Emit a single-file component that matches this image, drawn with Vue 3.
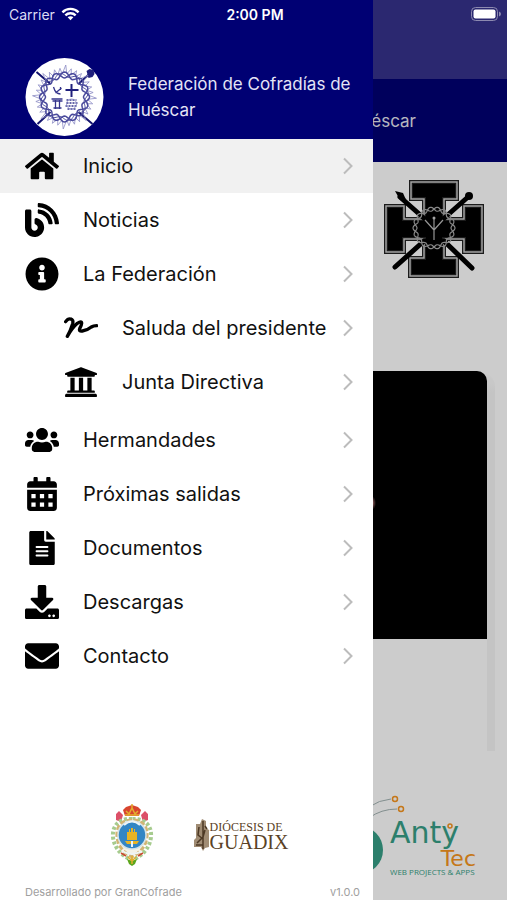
<template>
  <div class="app">
    <header class="status-bar">
      <div class="carrier">
        <span>Carrier</span>
        <svg class="wifi" viewBox="0 0 20 14" aria-hidden="true">
          <path d="M1.5 5.2a12 12 0 0 1 17 0" />
          <path d="M4.6 8.4a7.6 7.6 0 0 1 10.8 0" />
          <path class="wifi-dot" d="M10 13.6 7 10.5a4.2 4.2 0 0 1 6 0z" />
        </svg>
      </div>
      <time class="clock">2:00 PM</time>
      <svg class="battery" viewBox="0 0 30 14" aria-hidden="true">
        <rect class="battery-case" x="0.5" y="0.5" width="26" height="13" rx="4" />
        <rect x="2.5" y="2.5" width="22" height="9" rx="2" />
        <path class="battery-cap" d="M28 4.500q2 .8 2 2.500t-2 2.500z" />
      </svg>
    </header>

    <!-- Home page -->
    <main class="page">
      <div class="page-toolbar"></div>
      <div class="page-title">Huéscar</div>

      <div class="brotherhoods">
        <svg class="cross" viewBox="0 0 100 98" role="img" aria-label="Hermandad">
          <path
            class="cross-edge"
            d="M27 2h46v17H60v20h20V26h18v46H80V59H60v19h13v18H26V78h14V59H20v13H2V26h18v13h20V19H27z"
          />
          <path
            class="cross-line"
            d="M27 2h46v17H60v20h20V26h18v46H80V59H60v19h13v18H26V78h14V59H20v13H2V26h18v13h20V19H27z"
          />
          <path class="spear" d="M16 17 42 40M84 17 58 40M40 61 11 87M60 61 88 88" />
          <path d="M11 11l8 2 4 9-7-2z" />
          <circle cx="85" cy="16" r="4" />
          <path class="crown" :d="ring(50, 48, 19, 2, 9, 0)" />
          <path class="crown" :d="ring(50, 48, 19, 2, 9, Math.PI)" />
          <path class="scourge" d="M50 60V38M50 50 41 40M50 50l9-10" />
          <circle class="scourge-tip" cx="50" cy="38" r="1.500" />
        </svg>
      </div>

      <div class="carousel">
        <article class="card">
          <div class="card-photo"></div>
          <div class="card-body"></div>
        </article>
      </div>

      <footer class="page-footer">
        <svg class="antytec" viewBox="0 0 142 92" role="img" aria-label="Anty Tec">
          <circle class="teal" cx="24" cy="57" r="24" />
          <path class="wire" d="M34 14q10-7 22-8M34 25q12-9 28-9" />
          <circle class="node" cx="60" cy="6" r="2.500" />
          <circle class="node" cx="66" cy="16" r="2.500" />
          <text class="teal brand" x="55" y="50">Anty</text>
          <circle class="node" cx="115" cy="33" r="2" />
          <text class="orange brand small" x="141" y="73" text-anchor="end">Tec</text>
          <text class="teal tagline" x="55" y="82">WEB PROJECTS &amp; APPS</text>
        </svg>
      </footer>
    </main>

    <div class="backdrop"></div>

    <!-- Side menu -->
    <aside class="drawer">
      <div class="drawer-header">
        <svg class="emblem" viewBox="0 0 78 78" aria-hidden="true">
          <circle class="emblem-bg" cx="39" cy="39" r="39" />
          <path class="emblem-spear" d="M11 14 25 26M66 14 53 26M25 54 12 66M53 54l14 12" />
          <path d="M61 13l3-2 4 1 1 4-2 3-4 1z" />
          <path class="emblem-thorn" :d="thorns" />
          <path class="emblem-ring" :d="ring(39, 39, 22, 3, 8, 0)" />
          <path class="emblem-ring" :d="ring(39, 39, 22, 3, 8, Math.PI)" />
          <path class="emblem-ring thin" :d="ring(39, 39, 22, 2, 8, Math.PI / 2)" />
          <path class="emblem-cross" d="M46 26v13M40 32h13" />
          <path class="emblem-mark" d="M28 29q2 7 7 7M30 35l6-5M35 29v3" />
          <path class="emblem-mark" d="M26 41h11M27 43h10M30 42v9M34 42v9M28 50h8" />
          <path class="emblem-mark dotted" d="M41 42h10M41 45h11M40 48h12M42 51h8" />
          <circle class="emblem-thorn" cx="46" cy="46" r="5" />
        </svg>
        <h1 class="drawer-title">Federación de Cofradías de Huéscar</h1>
      </div>

      <nav class="menu">
        <a
          v-for="item in items"
          :key="item.label"
          href="#"
          class="menu-item"
          :class="{ active: item.label === current, sub: item.sub, last: item.last }"
          @click.prevent="current = item.label"
        >
          <svg
            class="menu-icon"
            :class="{ outline: item.stroke }"
            :viewBox="item.box"
            aria-hidden="true"
          >
            <path :d="item.icon" fill-rule="evenodd" />
          </svg>
          <span class="menu-label">{{ item.label }}</span>
          <svg class="chevron" viewBox="0 0 10 18" aria-hidden="true">
            <path d="M1 1.500 8.500 9 1 16.500" />
          </svg>
        </a>
      </nav>

      <div class="sponsors">
        <svg class="crest" viewBox="0 0 44 62" role="img" aria-label="Huéscar">
          <path class="red" d="M13 6l3-3 6-2 6 2 3 3-2 6H15z" />
          <path class="gold-line" d="M15 11h14M16 7l3 3 3-6 3 6 3-3M22 0v4" />
          <path class="pink" d="M9 7l4 4-2 7-5-2V10zM35 7l-4 4 2 7 5-2V10z" />
          <path class="leaf" d="M22 15C8 14 2 23 3 33s8 19 19 23c11-4 18-13 19-23S36 14 22 15z" />
          <path class="gold-wreath" d="M22 16C10 16 6 24 7 33s6 15 15 20c9-5 14-11 15-20s-3-17-15-17z" />
          <circle class="medal" cx="22" cy="31" r="14" />
          <path class="gold" d="M17 36v-8h2v-3h1v3h1v-4h2v4h1v-3h1v3h2v8z" />
          <path class="gold" d="M15 37h14l-2 3H17z" />
          <path class="white-line" d="M22 37v6M12 47q10 6 20 0M14 21q8-7 16 0" />
          <path class="green" d="M17 55l5 2 5-2-2 5-3 2-3-2z" />
          <path class="gold-line" d="M22 52v8M18 53l4 4 4-4" />
          <path class="red-line" d="M11 49l5 3M28 52l5-3" />
        </svg>

        <div class="diocese">
          <svg class="diocese-mark" viewBox="0 0 17 34" aria-hidden="true">
            <path class="stone" d="M3 6h4l2-5 4 2v7l3 2v17l-4 1-2 3-2-4H1V22l2-2z" />
            <path class="stone-line" d="M10 3v28M6 9l-1 8 5 4M12 12l-2 7-6 6M3 27h7M12 8l2 3" />
          </svg>
          <div class="diocese-text">
            <span class="diocese-top">DIÓCESIS DE</span>
            <span class="diocese-name">GUADIX</span>
          </div>
        </div>
      </div>

      <footer class="drawer-footer">
        <span>Desarrollado por GranCofrade</span>
        <span>v1.0.0</span>
      </footer>
    </aside>
  </div>
</template>

<script setup>
import { ref } from "vue";

const current = ref("Inicio");

const items = [
  {
    label: "Inicio",
    box: "0 0 576 512",
    icon: "M280.37 148.26L96 300.11V464a16 16 0 0 0 16 16l112.06-.29a16 16 0 0 0 15.92-16V368a16 16 0 0 1 16-16h64a16 16 0 0 1 16 16v95.64a16 16 0 0 0 16 16.05L464 480a16 16 0 0 0 16-16V300L295.67 148.26a12.19 12.19 0 0 0-15.3 0zM571.6 251.47L488 182.56V44.05a12 12 0 0 0-12-12h-56a12 12 0 0 0-12 12v72.61L318.47 43a48 48 0 0 0-61 0L4.34 251.47a12 12 0 0 0-1.6 16.9l25.5 31A12 12 0 0 0 45.15 301l235.22-193.74a12.19 12.19 0 0 1 15.3 0L530.9 301a12 12 0 0 0 16.9-1.6l25.5-31a12 12 0 0 0-1.7-16.93z",
  },
  {
    label: "Noticias",
    box: "0 0 512 512",
    icon: "M172.2 226.8c-14.6-2.9-28.2 8.9-28.2 23.8V301c0 10.2 7.1 18.4 16.7 22 18.2 6.8 31.3 24.4 31.3 45 0 26.5-21.5 48-48 48s-48-21.5-48-48V120c0-13.3-10.7-24-24-24H24c-13.3 0-24 10.7-24 24v248c0 89.5 82.1 160.2 175 140.7 54.4-11.4 98.3-55.4 109.7-109.7 17.4-82.9-37-157.2-112.5-172.2zM209 0c-9.2-.5-17 6.8-17 16v31.6c0 8.5 6.6 15.5 15 15.9 129.4 7 233.4 112 240.9 241.5.5 8.4 7.5 15 15.9 15h32.1c9.2 0 16.5-7.8 16-17C503.4 139.8 372.2 8.6 209 0zm.3 96c-9.3-.7-17.3 6.7-17.3 16.1v32.1c0 8.4 6.5 15.3 14.8 15.9 76.8 6.3 138 68.2 144.9 145.2.8 8.3 7.6 14.7 15.9 14.7h32.2c9.3 0 16.8-8 16.1-17.3-8.4-110.1-96.5-198.2-206.6-206.7z",
  },
  {
    label: "La Federación",
    box: "0 0 512 512",
    icon: "M256 8C119.043 8 8 119.083 8 256c0 136.997 111.043 248 248 248s248-111.003 248-248C504 119.083 392.957 8 256 8zm0 110c23.196 0 42 18.804 42 42s-18.804 42-42 42-42-18.804-42-42 18.804-42 42-42zm56 254c0 6.627-5.373 12-12 12h-88c-6.627 0-12-5.373-12-12v-24c0-6.627 5.373-12 12-12h12v-64h-12c-6.627 0-12-5.373-12-12v-24c0-6.627 5.373-12 12-12h64c6.627 0 12 5.373 12 12v100h12c6.627 0 12 5.373 12 12v24z",
  },
  {
    label: "Saluda del presidente",
    sub: true,
    stroke: true,
    box: "0 0 102 102",
    icon: "M5 32Q12 22 20 24Q29 26 26 38Q20 58 10 76Q25 50 40 37Q53 28 53 37Q53 42 47 53Q44 62 55 60Q70 58 82 48Q88 44 98 44",
  },
  {
    label: "Junta Directiva",
    sub: true,
    last: true,
    box: "0 0 512 512",
    icon: "M496 128v16a8 8 0 0 1-8 8h-24v12c0 6.627-5.373 12-12 12H60c-6.627 0-12-5.373-12-12v-12H24a8 8 0 0 1-8-8v-16a8 8 0 0 1 4.941-7.392l232-88a7.996 7.996 0 0 1 6.118 0l232 88A8 8 0 0 1 496 128zm-24 304H40c-13.255 0-24 10.745-24 24v16a8 8 0 0 0 8 8h464a8 8 0 0 0 8-8v-16c0-13.255-10.745-24-24-24zM96 192v192H60c-6.627 0-12 5.373-12 12v20h416v-20c0-6.627-5.373-12-12-12h-36V192h-64v192h-64V192h-64v192h-64V192H96z",
  },
  {
    label: "Hermandades",
    box: "0 0 640 512",
    icon: "M96 224c35.3 0 64-28.7 64-64s-28.7-64-64-64-64 28.7-64 64 28.7 64 64 64zm448 0c35.3 0 64-28.7 64-64s-28.7-64-64-64-64 28.7-64 64 28.7 64 64 64zm32 32h-64c-17.6 0-33.5 7.1-45.1 18.6 40.3 22.1 68.9 62 75.1 109.4h66c17.7 0 32-14.3 32-32v-32c0-35.3-28.7-64-64-64zm-256 0c61.9 0 112-50.1 112-112S381.9 32 320 32 208 82.1 208 144s50.1 112 112 112zm76.8 32h-8.3c-20.8 10-43.9 16-68.5 16s-47.6-6-68.5-16h-8.3C179.6 288 128 339.6 128 403.2V432c0 26.5 21.5 48 48 48h288c26.5 0 48-21.5 48-48v-28.8c0-63.6-51.6-115.2-115.2-115.2zm-223.7-13.4C161.5 263.1 145.6 256 128 256H64c-35.3 0-64 28.7-64 64v32c0 17.7 14.3 32 32 32h65.9c6.3-47.4 34.9-87.3 75.2-109.4z",
  },
  {
    label: "Próximas salidas",
    box: "-32 0 512 512",
    icon: "M0 464c0 26.5 21.5 48 48 48h352c26.5 0 48-21.5 48-48V192H0zM64 256h64v64H64zM192 256h64v64h-64zM320 256h64v64h-64zM64 384h64v64H64zM192 384h64v64h-64zM320 384h64v64h-64zM400 64h-48V16c0-8.8-7.2-16-16-16h-32c-8.8 0-16 7.2-16 16v48H160V16c0-8.8-7.2-16-16-16h-32c-8.8 0-16 7.2-16 16v48H48C21.5 64 0 85.5 0 112v48h448v-48c0-26.5-21.5-48-48-48z",
  },
  {
    label: "Documentos",
    box: "-64 0 512 512",
    icon: "M224 136V0H24C10.7 0 0 10.7 0 24v464c0 13.3 10.7 24 24 24h336c13.3 0 24-10.7 24-24V160H248c-13.2 0-24-10.8-24-24zm64 236c0 6.6-5.4 12-12 12H108c-6.6 0-12-5.4-12-12v-8c0-6.6 5.4-12 12-12h168c6.6 0 12 5.4 12 12v8zm0-64c0 6.6-5.4 12-12 12H108c-6.6 0-12-5.4-12-12v-8c0-6.6 5.4-12 12-12h168c6.6 0 12 5.4 12 12v8zm0-72v8c0 6.6-5.4 12-12 12H108c-6.6 0-12-5.4-12-12v-8c0-6.6 5.4-12 12-12h168c6.6 0 12 5.4 12 12zm96-114.1v6.1H256V0h6.1c6.4 0 12.5 2.5 17 7l97.9 98c4.5 4.5 7 10.6 7 16.9z",
  },
  {
    label: "Descargas",
    box: "0 0 512 512",
    icon: "M216 0h80c13.3 0 24 10.7 24 24v168h87.7c17.8 0 26.7 21.5 14.1 34.1L269.7 378.3c-7.5 7.5-19.8 7.5-27.3 0L90.1 226.1c-12.6-12.6-3.7-34.1 14.1-34.1H192V24c0-13.3 10.7-24 24-24zm296 376v112c0 13.3-10.7 24-24 24H24c-13.3 0-24-10.7-24-24V376c0-13.3 10.7-24 24-24h146.7l49 49c20.1 20.1 52.5 20.1 72.6 0l49-49H488c13.3 0 24 10.7 24 24zm-124 88c0-11-9-20-20-20s-20 9-20 20 9 20 20 20 20-9 20-20zm64 0c0-11-9-20-20-20s-20 9-20 20 9 20 20 20 20-9 20-20z",
  },
  {
    label: "Contacto",
    box: "0 0 512 512",
    icon: "M502.3 190.8c3.9-3.1 9.7-.2 9.7 4.7V400c0 26.5-21.5 48-48 48H48c-26.5 0-48-21.5-48-48V195.6c0-5 5.7-7.8 9.7-4.7 22.4 17.4 52.1 39.5 154.1 113.6 21.1 15.4 56.7 47.8 92.2 47.6 35.7.3 72-32.8 92.3-47.6 102-74.1 131.6-96.3 154-113.7zM256 320c23.2.4 56.6-29.2 73.4-41.4 132.7-96.3 142.8-104.7 173.4-128.7 5.8-4.5 9.2-11.5 9.2-18.9v-19c0-26.5-21.5-48-48-48H48c-26.5 0-48 21.5-48 48v19c0 7.4 3.4 14.3 9.2 18.9 30.6 23.9 40.7 32.4 173.4 128.7 16.8 12.2 50.2 41.8 73.4 41.4z",
  },
];

// wavy closed ring, two of them out of phase make a braided crown
const ring = (cx, cy, radius, wave, count, phase) => {
  const points = [];
  for (let i = 0; i < 144; i++) {
    const angle = (i / 144) * Math.PI * 2;
    const r = radius + wave * Math.cos(count * angle + phase);
    points.push(`${(cx + r * Math.cos(angle)).toFixed(2)} ${(cy + r * Math.sin(angle)).toFixed(2)}`);
  }
  return `M${points.join("L")}Z`;
};

const thorns = Array.from({ length: 32 }, (_, i) => {
  const angle = (i / 32) * Math.PI * 2;
  const outer = i % 4 === 0 ? 32 : 29;
  const at = (r, a) => `${(39 + r * Math.cos(a)).toFixed(2)} ${(39 + r * Math.sin(a)).toFixed(2)}`;
  return `M${at(23, angle - 0.1)}L${at(outer, angle + 0.04)}L${at(23, angle + 0.1)}`;
}).join("");
</script>

<style>
body {
  margin: 0;
}
</style>

<style scoped>
.app {
  position: relative;
  min-height: 100vh;
  overflow: hidden;
  background: #fff;
  font-family: Inter, "Liberation Sans", sans-serif;
  color: #111;
}

/* Status bar */
.status-bar {
  position: absolute;
  inset: 0 0 auto 0;
  z-index: 3;
  display: grid;
  grid-template-columns: 1fr auto 1fr;
  align-items: center;
  height: 28px;
  padding: 0 6px 0 9px;
  color: #fff;
  font-size: 14px;
}

.carrier {
  display: flex;
  align-items: center;
  gap: 6px;
  color: #dcdcf4;
}

.clock {
  font-weight: 600;
}

.wifi {
  width: 19px;
  height: 14px;
  fill: none;
  stroke: #fff;
  stroke-width: 2.5;
}

.wifi-dot {
  fill: #fff;
  stroke: none;
}

.battery {
  justify-self: end;
  width: 30px;
  height: 14px;
  fill: #fff;
}

.battery-case {
  fill: none;
  stroke: #8d8ab0;
}

.battery-cap {
  fill: #8d8ab0;
}

/* Page behind the menu */
.page {
  display: flex;
  flex-direction: column;
  min-height: 100vh;
}

.page-toolbar {
  height: 79px;
  background: #36328c;
}

.page-title {
  display: flex;
  align-items: center;
  justify-content: flex-end;
  height: 83px;
  padding-right: 91px;
  background: #000073;
  color: #e4e4f0;
  font-size: 17px;
}

.brotherhoods {
  display: flex;
  justify-content: flex-end;
  padding: 18px 23px 0 0;
}

.cross {
  width: 100px;
  height: 98px;
}

.cross-edge {
  fill: #000;
  stroke: #222;
  stroke-width: 4;
}

.cross-line {
  fill: none;
  stroke: #ccc;
  stroke-width: 1.5;
}

.spear {
  fill: none;
  stroke: #000;
  stroke-width: 5;
  stroke-linecap: round;
}

.crown {
  fill: none;
  stroke: #aaa;
  stroke-width: 1.2;
}

.scourge {
  fill: none;
  stroke: #bbb;
  stroke-width: 1.2;
}

.scourge-tip {
  fill: #ccc;
}

.carousel {
  margin: 93px 12px 0 20px;
  padding-right: 8px;
  background: linear-gradient(to bottom, #fff, #f5f5f5 24px);
  border-top-right-radius: 16px;
}

.card {
  overflow: hidden;
  border-radius: 10px 10px 0 0;
  background: #fff;
}

.card-photo {
  height: 268px;
  background: radial-gradient(ellipse 4px 7px at 352px 132px, #d89090, #000);
}

.card-body {
  height: 112px;
}

.page-footer {
  display: flex;
  justify-content: flex-end;
  margin-top: auto;
  padding: 0 30px 15px 0;
}

.antytec {
  width: 142px;
  height: 92px;
}

.teal {
  fill: #389f88;
}

.orange {
  fill: #f79520;
}

.wire {
  fill: none;
  stroke: #a3b3b3;
  stroke-width: 1;
}

.node {
  fill: none;
  stroke: #f79520;
  stroke-width: 1.5;
}

.brand {
  font-family: "DejaVu Sans", sans-serif;
  font-size: 30px;
}

.brand.small {
  font-size: 22px;
}

.tagline {
  font-family: "Open Sans", sans-serif;
  font-size: 8px;
}

.backdrop {
  position: absolute;
  inset: 0;
  z-index: 1;
  background: rgba(0, 0, 0, 0.2);
}

/* Drawer */
.drawer {
  position: absolute;
  inset: 0 auto 0 0;
  z-index: 2;
  display: flex;
  flex-direction: column;
  width: 85%;
  max-width: 373px;
  background: #fff;
}

.drawer-header {
  display: flex;
  align-items: center;
  gap: 24px;
  padding: 58px 20px 3px 25px;
  background: #000073;
}

.emblem {
  flex: none;
  width: 79px;
  height: 78px;
  fill: #1f1f7c;
}

.emblem-bg {
  fill: #fff;
}

.emblem-spear {
  fill: none;
  stroke: #14146e;
  stroke-width: 2;
}

.emblem-ring {
  fill: none;
  stroke: #4a4a9c;
  stroke-width: 1.5;
}

.emblem-ring.thin {
  stroke-width: 1;
}

.emblem-thorn {
  fill: none;
  stroke: #8c8cc4;
  stroke-width: 0.8;
}

.emblem-cross {
  stroke: #1f1f7c;
  stroke-width: 2;
}

.emblem-mark {
  fill: none;
  stroke: #35358c;
  stroke-width: 1.3;
}

.emblem-mark.dotted {
  stroke-dasharray: 2 1;
}

.drawer-title {
  margin: 0;
  color: #e4e4f6;
  font-size: 17px;
  font-weight: 400;
  line-height: 26px;
}

.menu-item {
  display: flex;
  align-items: center;
  gap: 24px;
  height: 54px;
  padding: 0 20px 0 25px;
  color: #111;
  text-decoration: none;
}

.menu-item.active {
  background: #f1f1f1;
}

.menu-item.sub {
  padding-left: 64px;
}

.menu-item.last {
  margin-bottom: 4px;
}

.menu-icon {
  flex: none;
  width: 34px;
  height: 34px;
  fill: #000;
}

.menu-icon.outline {
  fill: none;
  stroke: #000;
  stroke-width: 10;
  stroke-linecap: round;
  stroke-linejoin: round;
}

.menu-label {
  flex: 1;
  font-size: 20px;
  white-space: nowrap;
}

.menu-item.sub .menu-label {
  margin-right: -20px;
}

.chevron {
  flex: none;
  width: 10px;
  height: 18px;
  fill: none;
  stroke: #bcbcbc;
  stroke-width: 2;
}

.sponsors {
  display: flex;
  align-items: center;
  justify-content: center;
  gap: 39px;
  margin-top: auto;
  padding-left: 25px;
}

.crest {
  width: 44px;
  height: 62px;
}

.red {
  fill: #d8452e;
}

.pink {
  fill: #dc5068;
}

.leaf {
  fill: none;
  stroke: #a6cb8e;
  stroke-width: 4;
  stroke-dasharray: 3 2;
}

.gold-wreath {
  fill: #f4f2e6;
  stroke: #d2b473;
  stroke-width: 3;
  stroke-dasharray: 5 2;
}

.medal {
  fill: #3386c4;
  stroke: #d3e2e8;
  stroke-width: 1.5;
}

.gold {
  fill: #e8b424;
}

.gold-line {
  fill: none;
  stroke: #e3ad2e;
  stroke-width: 1.5;
}

.white-line {
  fill: none;
  stroke: #eef4f6;
  stroke-width: 2;
}

.green {
  fill: #5ca61c;
}

.red-line {
  stroke: #cc4a32;
  stroke-width: 1.5;
}

.diocese {
  display: flex;
  align-items: center;
}

.diocese-mark {
  width: 17px;
  height: 34px;
}

.stone {
  fill: #a08c74;
}

.stone-line {
  fill: none;
  stroke: #4c3824;
  stroke-width: 1.5;
}

.diocese-text {
  display: flex;
  flex-direction: column;
  color: #5a4226;
  font-family: "Liberation Serif", serif;
}

.diocese-top {
  font-size: 12px;
  line-height: 14px;
}

.diocese-name {
  font-size: 20px;
  line-height: 16px;
}

.drawer-footer {
  display: flex;
  justify-content: space-between;
  margin-top: 18px;
  padding: 0 13px 0 25px;
  color: #a0a0a0;
  font-size: 11px;
  line-height: 16px;
}
</style>
